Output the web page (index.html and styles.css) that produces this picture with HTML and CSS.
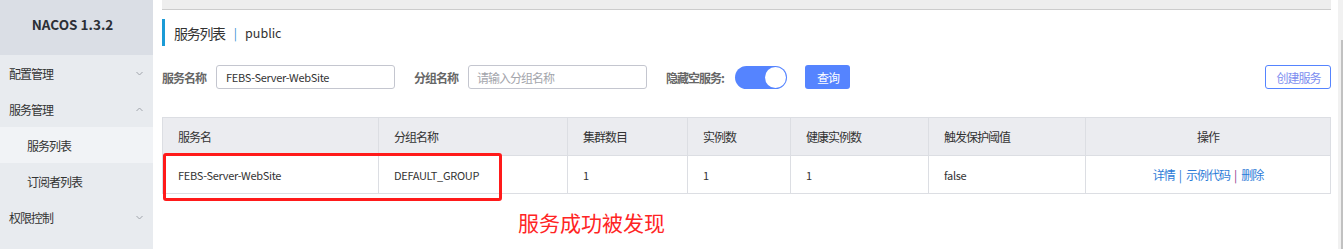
FILE: index.html
```html
<!DOCTYPE html>
<html lang="zh-CN">
<head>
<meta charset="utf-8">
<title>NACOS</title>
<link rel="stylesheet" href="styles.css">
</head>
<body>
<aside class="sidebar">
  <div class="brand">NACOS 1.3.2</div>
  <ul class="menu">
    <li class="menu-item"><span>配置管理</span>
      <svg class="chev" width="7" height="5" viewBox="0 0 7 5"><polyline points="0.5,1 3.5,4 6.5,1" fill="none" stroke="#a0a4ab" stroke-width="1"/></svg>
    </li>
    <li class="menu-item"><span>服务管理</span>
      <svg class="chev" width="7" height="5" viewBox="0 0 7 5"><polyline points="0.5,4 3.5,1 6.5,4" fill="none" stroke="#a0a4ab" stroke-width="1"/></svg>
    </li>
    <li class="menu-item sub active"><span>服务列表</span></li>
    <li class="menu-item sub"><span>订阅者列表</span></li>
    <li class="menu-item"><span>权限控制</span>
      <svg class="chev" width="7" height="5" viewBox="0 0 7 5"><polyline points="0.5,1 3.5,4 6.5,1" fill="none" stroke="#a0a4ab" stroke-width="1"/></svg>
    </li>
  </ul>
</aside>
<main class="main">
  <div class="topbar"></div>
  <h1 class="title"><span>服务列表</span><span class="sep">|</span><span class="ns">public</span></h1>
  <div class="form-row">
    <label class="label">服务名称</label>
    <div class="input latin">FEBS-Server-WebSite</div>
    <label class="label gap">分组名称</label>
    <div class="input placeholder">请输入分组名称</div>
    <label class="label gap wide">隐藏空服务:</label>
    <div class="switch"><div class="knob"></div></div>
    <button class="btn-primary">查询</button>
    <button class="btn-outline">创建服务</button>
  </div>
  <div class="table-wrap">
    <table class="table">
      <colgroup>
        <col class="c1"><col class="c2"><col class="c3"><col class="c4"><col class="c5"><col class="c6"><col class="c7">
      </colgroup>
      <thead>
        <tr><th>服务名</th><th>分组名称</th><th>集群数目</th><th>实例数</th><th>健康实例数</th><th>触发保护阈值</th><th class="center">操作</th></tr>
      </thead>
      <tbody>
        <tr><td class="latin">FEBS-Server-WebSite</td><td class="latin">DEFAULT_GROUP</td><td class="latin">1</td><td class="latin">1</td><td class="latin">1</td><td class="latin">false</td>
          <td class="center"><a class="link">详情</a><span class="bar">|</span><a class="link">示例代码</a><span class="bar alt">|</span><a class="link">删除</a></td></tr>
      </tbody>
    </table>
    <div class="highlight"></div>
  </div>
  <p class="note">服务成功被发现</p>
</main>
<div class="scrollbar"><div class="thumb"></div></div>
</body>
</html>
```
FILE: styles.css
```css
* { box-sizing: border-box; }
html, body { margin: 0; padding: 0; }
body {
  width: 1343px;
  height: 249px;
  overflow: hidden;
  display: flex;
  background: #fff;
  font-family: "Noto Sans CJK SC", "Noto Sans", sans-serif;
  font-size: 12px;
  letter-spacing: -1px;
  color: #333;
}
.latin { font-size: 11px; letter-spacing: -0.3px; }
.sidebar {
  width: 153px;
  flex: none;
  background: #e8ebef;
}
.brand {
  height: 55px;
  background: #dadee5;
  display: flex;
  align-items: center;
  justify-content: center;
  font-weight: bold;
  font-size: 13.5px;
  letter-spacing: 0;
  color: #2b2f36;
  padding: 0 8px 8px 0;
}
.menu { list-style: none; margin: 0; padding: 0; }
.menu-item {
  height: 36px;
  display: flex;
  align-items: center;
  justify-content: space-between;
  padding: 0 10px 0 9px;
  color: #333;
}
.menu-item.sub { padding-left: 27px; }
.menu-item.active { background: #f1f3f6; }
.chev { display: block; }
.main {
  flex: 1;
  padding: 0 7px 0 9px;
  display: flex;
  flex-direction: column;
}
.topbar {
  height: 10px;
  background: #eeeeee;
  border-bottom: 1px solid #cccccc;
}
.title {
  margin: 9px 0 0 0;
  height: 27px;
  border-left: 3px solid #1b9bd6;
  padding-left: 9px;
  display: flex;
  align-items: center;
  font-size: 14px;
  letter-spacing: -1.3px;
  font-weight: normal;
  color: #333;
}
.title .sep { color: #3a8fd0; margin: 0 8px 0 9px; font-size: 12px; letter-spacing: 0; }
.title .ns { font-size: 12.5px; letter-spacing: 0; }
.form-row {
  margin-top: 19px;
  height: 24px;
  display: flex;
  align-items: center;
}
.label {
  width: 44px;
  color: #666;
  font-weight: bold;
  margin-right: 10px;
  white-space: nowrap;
}
.label.gap { margin-left: 19px; }
.label.wide { width: 58px; margin-right: 11px; }
.input {
  width: 179px;
  height: 24px;
  border: 1px solid #c4c6cf;
  border-radius: 3px;
  padding-left: 8px;
  display: flex;
  align-items: center;
  color: #333;
}
.input.latin { padding-left: 9px; }
.input.placeholder { color: #a3a5ab; }
.switch {
  width: 52px;
  height: 23px;
  border-radius: 12px;
  background: #5584ff;
  position: relative;
  margin-right: 18px;
}
.knob {
  position: absolute;
  right: 1px;
  top: 1px;
  width: 21px;
  height: 21px;
  border-radius: 50%;
  background: #fff;
}
.btn-primary {
  width: 45px;
  height: 24px;
  border: none;
  border-radius: 3px;
  background: #5584ff;
  color: #fff;
  font-family: inherit;
  font-size: 12px;
  letter-spacing: -1px;
  padding: 0 0 0 1px;
}
.btn-outline {
  margin-left: auto;
  width: 66px;
  height: 24px;
  border: 1px solid #5584ff;
  border-radius: 3px;
  background: #fff;
  color: #7d8ef0;
  font-family: inherit;
  font-size: 12px;
  letter-spacing: -1px;
  padding: 0 0 0 1px;
}
.table-wrap {
  margin-top: 28px;
  position: relative;
}
.table {
  width: 100%;
  border-collapse: collapse;
  table-layout: fixed;
  border: 1px solid #dcdee3;
}
.c1 { width: 216px; }
.c2 { width: 189px; }
.c3 { width: 120px; }
.c4 { width: 103px; }
.c5 { width: 138px; }
.c6 { width: 157px; }
.c7 { width: auto; }
.table th, .table td {
  height: 38px;
  border: 1px solid #dcdee3;
  padding: 0 15px;
  text-align: left;
  font-weight: normal;
  color: #333;
}
.table th { background: #ebecf0; }
.table .center { text-align: center; }
.link { color: #2d7bd7; }
.bar { color: #2d7bd7; margin: 0 4px; letter-spacing: 0; }
.bar.alt { color: #8a3b8f; }
.highlight {
  position: absolute;
  left: 1px;
  top: 36px;
  width: 339px;
  height: 48px;
  border: 3px solid #ff1a1a;
  border-radius: 3px;
}
.note {
  margin: 14px 0 0 356px;
  font-size: 21px;
  letter-spacing: 0;
  line-height: 28px;
  color: #ff2424;
}
.scrollbar {
  width: 5px;
  flex: none;
  background: #f1f1f1;
  position: relative;
}
.thumb {
  position: absolute;
  left: 3px;
  top: 40px;
  width: 2px;
  bottom: 0;
  background: #c1c1c1;
}
```
